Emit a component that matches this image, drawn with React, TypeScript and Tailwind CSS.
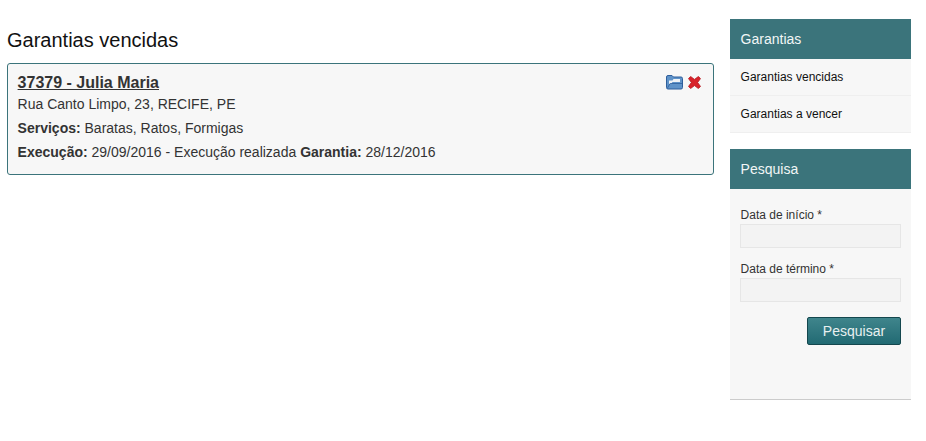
export default function App() {
  return (
    <div className="flex w-[926px] h-[441px] bg-white font-['Liberation_Sans',sans-serif] text-[14px] text-[#333]">
      <main className="w-[730px] shrink-0 pt-[28px] pl-[7px] pr-[16px]">
        <h1 className="text-[20px] leading-[24px] text-[#111] mb-[11px]">Garantias vencidas</h1>
        <div className="relative h-[112px] rounded-[3px] border border-[#3b747b] bg-[#f7f7f7] pl-[9.6px] pt-[9px]">
          <a className="block text-[16px] leading-[20px] font-bold underline text-[#333]">37379 - Julia Maria</a>
          <p className="leading-[20px] mt-[1px]">Rua Canto Limpo, 23, RECIFE, PE</p>
          <p className="leading-[20px] mt-[4px]"><b>Serviços:</b> Baratas, Ratos, Formigas</p>
          <p className="leading-[20px] mt-[4px]"><b>Execução:</b> 29/09/2016 - Execução realizada <b>Garantia:</b> 28/12/2016</p>
          <div className="absolute top-[10px] right-[12px] flex items-center gap-[5px]">
            <svg width="17" height="16" viewBox="0 0 17 16">
              <path d="M0.5 13.5V3a1.5 1.5 0 0 1 1.5-1.5h4L7.5 3H15a1.5 1.5 0 0 1 1.5 1.5v9a1.5 1.5 0 0 1-1.5 1.5H2a1.5 1.5 0 0 1-1.5-1.5z" fill="#5f93c9" stroke="#2f5f9c" />
              <path d="M3 10V6.5h3.5l1-1.5H14v3H6.5L5 10z" fill="#f0f3f6" />
              <path d="M1.5 14L4 9.5h12" fill="none" stroke="#2f5f9c" strokeWidth="0.8" />
            </svg>
            <svg width="13" height="13" viewBox="0 0 13 13">
              <path d="M0.5 2.6L2.6 0.5 6.5 3.4 10.4 0.5 12.5 2.6 9.6 6.5 12.5 10.4 10.4 12.5 6.5 9.6 2.6 12.5 0.5 10.4 3.4 6.5z" fill="#d8222a" stroke="#b4141c" strokeWidth="0.8" />
            </svg>
          </div>
        </div>
      </main>
      <aside className="w-[181px] shrink-0 pt-[19px]">
        <div className="flex h-[40px] items-center bg-[#3b747b] pl-[10.6px] text-[14px] text-[#f2f6f6]">Garantias</div>
        <nav className="bg-[#f7f7f7] text-[12px] text-[#111]">
          <div className="flex h-[37px] items-center border-b border-[#efefef] pl-[10.6px]">Garantias vencidas</div>
          <div className="flex h-[37px] items-center border-b border-[#efefef] pl-[10.6px]">Garantias a vencer</div>
        </nav>
        <div className="mt-[16px] flex h-[40px] items-center bg-[#3b747b] pl-[10.6px] text-[14px] text-[#f2f6f6]">Pesquisa</div>
        <form className="h-[211px] border-b border-[#cccccc] bg-[#f7f7f7] px-[10px] pt-[18px] text-[12px] text-[#333]">
          <label className="block pl-[0.6px] leading-[16px]">Data de início *</label>
          <div className="mt-[1px] h-[24px] border border-[#e6e6e6] bg-[#f3f3f3]" />
          <label className="mt-[13px] block pl-[0.6px] leading-[16px]">Data de término *</label>
          <div className="mt-[1px] h-[24px] border border-[#e6e6e6] bg-[#f3f3f3]" />
          <div className="mt-[15px] flex justify-end">
            <button type="button" className="h-[28px] w-[94px] rounded-[2px] border border-[#14474e] bg-gradient-to-b from-[#3f858c] to-[#216a73] text-[14px] text-[#e8f0f0]">Pesquisar</button>
          </div>
        </form>
      </aside>
    </div>
  );
}
